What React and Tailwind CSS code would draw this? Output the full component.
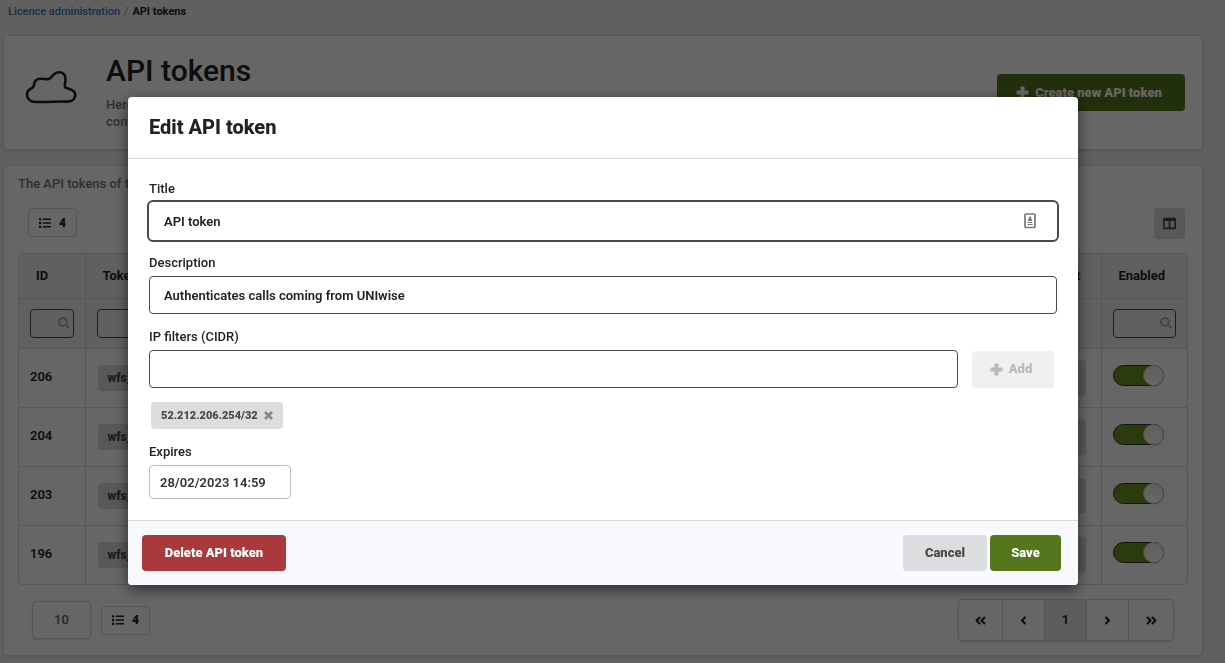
import React, { useState } from "react";
import {
  FaList,
  FaSearch,
  FaColumns,
  FaAngleDoubleLeft,
  FaAngleLeft,
  FaAngleRight,
  FaAngleDoubleRight,
} from "react-icons/fa";

const tokens = [
  { id: 206, token: "wfs_8d" },
  { id: 204, token: "wfs_c0" },
  { id: 203, token: "wfs_41" },
  { id: 196, token: "wfs_e9" },
];

const CloudIcon = () => (
  <svg
    className="h-[34px] w-[52px] shrink-0 text-[#222]"
    viewBox="0 0 52 34"
    fill="none"
    stroke="currentColor"
    strokeWidth="2.600"
    strokeLinejoin="round"
  >
    <path d="M11 32 C5.500 32 2 29 2 24.500 C2 21 4.500 18.800 7.500 17.700 C9.700 16.800 8.700 14.500 9.500 12.500 C10.500 9.800 12.500 8.700 15.500 8.700 C18.500 8.700 21.500 9.500 24 9 C26.500 8 28.500 2.600 33.500 2.300 C38.500 2.200 40.500 5 40.500 9.500 C40.500 12.500 39 16 40 17.300 C42 19 50.200 19 50.300 24.800 C50.200 29.500 46.500 31.600 42 31.600 C32 31.300 24 32.300 11 32 Z" />
  </svg>
);

const ContactIcon = () => (
  <svg className="h-4 w-3 text-[#777]" viewBox="0 0 12 16" fill="none">
    <rect x="1" y="1" width="10" height="13.500" rx="1" stroke="currentColor" strokeWidth="1.700" />
    <path d="M6 3 L7.200 5 L8.200 8 H3.800 L4.800 5 Z" fill="currentColor" />
    <path d="M3.500 9.500 H8.500 M3.500 11.500 H8.500" stroke="currentColor" />
  </svg>
);

const PlusIcon = () => (
  <svg className="size-[13px]" viewBox="0 0 13 13" fill="currentColor">
    <path d="M5.200 0.500 H7.800 Q8.500 0.500 8.500 1.200 V4.500 H11.800 Q12.500 4.500 12.500 5.200 V7.800 Q12.500 8.500 11.800 8.500 H8.500 V11.800 Q8.500 12.500 7.800 12.500 H5.200 Q4.500 12.500 4.500 11.800 V8.500 H1.200 Q0.500 8.500 0.500 7.800 V5.200 Q0.500 4.500 1.200 4.500 H4.500 V1.200 Q4.500 0.500 5.200 0.500 Z" />
  </svg>
);

const CloseIcon = () => (
  <svg className="size-[9px]" viewBox="0 0 9 9" stroke="currentColor" strokeWidth="2.800">
    <path d="M1 1 L8 8 M8 1 L1 8" />
  </svg>
);

const CountButton = ({ count }) => (
  <button
    type="button"
    className="flex h-[29px] items-center gap-2 rounded border border-[#d4d4d4] px-[10px] text-xs font-black text-[#222]"
  >
    <FaList className="size-3" />
    {count}
  </button>
);

const SearchBox = ({ label, className }) => (
  <div className={`relative ${className}`}>
    <input
      type="text"
      aria-label={label}
      className="block h-[29px] w-full rounded border border-[#4a4a4a] bg-transparent px-2 outline-none"
    />
    <FaSearch className="absolute right-1 top-2 size-3 text-[#aaa]" />
  </div>
);

const Toggle = ({ label }) => (
  <label className="relative block h-[21px] w-[51px]">
    <input
      type="checkbox"
      defaultChecked
      aria-label={label}
      className="peer block h-full w-full appearance-none rounded-full border border-[#333] bg-gray-300 checked:bg-[#6b9321]"
    />
    <span className="absolute left-0 top-0 size-[21px] rounded-full border border-[#ccc] bg-gradient-to-b from-[#eee] to-white shadow-sm peer-checked:left-[30px]" />
  </label>
);

const pages = [
  { label: "First page", icon: <FaAngleDoubleLeft /> },
  { label: "Previous page", icon: <FaAngleLeft /> },
  { label: "Page 1", icon: "1", active: true },
  { label: "Next page", icon: <FaAngleRight /> },
  { label: "Last page", icon: <FaAngleDoubleRight /> },
];

const TokenTable = () => (
  <div className="overflow-hidden rounded border border-[#d6dada]">
    <table className="w-full table-fixed border-collapse text-left">
      <thead className="bg-[#eef1f0]">
        <tr className="h-11">
          <th className="w-[66px] border-r border-[#d6dada] px-[17px] font-bold">ID</th>
          <th className="border-r border-[#d6dada] px-[17px] font-bold">Token</th>
          <th className="w-[160px] border-r border-[#d6dada] px-5 text-right font-bold">Edit</th>
          <th className="w-[86px] px-[17px] font-bold">Enabled</th>
        </tr>
        <tr className="h-[50px] border-t border-[#d6dada]">
          <td className="border-r border-[#d6dada] px-[11px]">
            <SearchBox label="Search ID" className="w-full" />
          </td>
          <td className="border-r border-[#d6dada] px-[11px]">
            <SearchBox label="Search token" className="w-1/2" />
          </td>
          <td className="border-r border-[#d6dada]" />
          <td className="px-[11px]">
            <SearchBox label="Search enabled" className="w-full" />
          </td>
        </tr>
      </thead>
      <tbody>
        {tokens.map((t) => (
          <tr key={t.id} className="h-[59px] border-t border-[#d6dada]">
            <td className="border-r border-[#d6dada] px-[11px] pb-[2px] font-semibold">{t.id}</td>
            <td className="border-r border-[#d6dada] px-3">
              <span className="inline-block h-[26px] rounded bg-[#dcddde] px-[10px] text-xs font-black leading-[26px] text-[#4a4a4a]">
                {t.token}
              </span>
            </td>
            <td className="border-r border-[#d6dada] px-[15px] text-right">
              <button type="button" className="h-9 rounded bg-[#dcddde] px-5 font-black text-[#4a4a4a]">
                Edit
              </button>
            </td>
            <td className="px-[11px] pb-[5px]">
              <Toggle label={`Enable token ${t.id}`} />
            </td>
          </tr>
        ))}
      </tbody>
    </table>
  </div>
);

const inputClass =
  "block h-[38px] w-full rounded border border-[#4a4a4a] px-[14px] font-semibold text-[#222] outline-none";
const labelClass = "mb-[3px] block pt-px font-medium leading-5";

const EditModal = () => {
  const [title, setTitle] = useState("API token");
  const [description, setDescription] = useState("Authenticates calls coming from UNIwise");
  const [filter, setFilter] = useState("");
  const [expires, setExpires] = useState("28/02/2023 14:59");

  return (
    <div
      role="dialog"
      aria-labelledby="modal-title"
      className="w-full max-w-[950px] overflow-hidden rounded bg-white shadow-[0_4px_14px_rgba(0,0,0,0.6)]"
    >
      <div className="border-b border-[#d6d8da] px-[21px] py-4">
        <h2 id="modal-title" className="text-xl font-extrabold leading-[29px]">
          Edit API token
        </h2>
      </div>

      <form className="px-[21px] pb-[21px] pt-[19px]">
        <div className="mb-3">
          <label htmlFor="title" className={labelClass}>Title</label>
          <div className="relative">
            <input
              id="title"
              type="text"
              value={title}
              onChange={(e) => setTitle(e.target.value)}
              className="block h-[38px] w-full rounded px-[15px] font-semibold text-[#222] outline-2 outline-[#4a4a4a]"
            />
            <div className="absolute right-[21px] top-[11px]">
              <ContactIcon />
            </div>
          </div>
        </div>

        <div className="mb-3">
          <label htmlFor="description" className={labelClass}>Description</label>
          <input
            id="description"
            type="text"
            value={description}
            onChange={(e) => setDescription(e.target.value)}
            className={inputClass}
          />
        </div>

        <div className="mb-3">
          <label htmlFor="ip-filter" className={labelClass}>IP filters (CIDR)</label>
          <div className="flex items-center gap-[14px] pr-[3px]">
            <input
              id="ip-filter"
              type="text"
              value={filter}
              onChange={(e) => setFilter(e.target.value)}
              className={inputClass}
            />
            <button
              type="button"
              disabled
              className="flex h-[37px] w-[82px] shrink-0 items-center justify-center gap-[6px] rounded bg-[#eef1f0] pr-1 font-black text-[#b8b9b9]"
            >
              <PlusIcon />
              Add
            </button>
          </div>
          <div className="ml-[2px] mt-[14px] inline-flex h-[27px] items-center gap-[6px] rounded bg-[#dcddde] px-[10px] align-top text-[11px] font-black text-[#4a4a4a]">
            52.212.206.254/32
            <button type="button" aria-label="Remove filter" className="text-[#888]">
              <CloseIcon />
            </button>
          </div>
        </div>

        <div>
          <label htmlFor="expires" className={labelClass}>Expires</label>
          <input
            id="expires"
            type="text"
            value={expires}
            onChange={(e) => setExpires(e.target.value)}
            className="block h-[34px] w-[142px] rounded border border-[#bbb] px-[10px] font-semibold text-[#333] outline-none"
          />
        </div>
      </form>

      <div className="flex items-center justify-between border-t border-[#d6d8da] bg-[#f8f9fc] py-[14px] pl-[14px] pr-[17px]">
        <button type="button" className="h-9 w-36 rounded bg-[#a9393d] font-black text-white">
          Delete API token
        </button>
        <div className="flex gap-[3px]">
          <button type="button" className="h-9 w-[84px] rounded bg-[#dcddde] font-black text-[#4a4a4a]">
            Cancel
          </button>
          <button type="button" className="h-9 w-[71px] rounded bg-[#56761e] font-black text-white">
            Save
          </button>
        </div>
      </div>
    </div>
  );
};

const App = () => {
  return (
    <div className="min-h-screen bg-[#f0f0f0] pb-[7px] pl-[3px] pr-[22px] font-['Roboto','Lato',sans-serif] text-[13px] leading-5 text-[#222]">
      <nav className="flex h-[35px] gap-1 px-[5px] pt-[2px] text-[11px] font-medium">
        <a href="#licence" className="text-[#3078c0]">Licence administration</a>
        <span className="text-[#999]">/</span>
        <span className="font-bold">API tokens</span>
      </nav>

      <header className="flex min-h-[115px] items-center justify-between rounded border border-[#ddd] bg-white pl-[21px] pr-[17px] shadow-sm">
        <div className="flex items-start gap-[29px]">
          <div className="pt-[19px]">
            <CloudIcon />
          </div>
          <div className="pb-[5px]">
            <h1 className="text-[30px] font-medium leading-10">API tokens</h1>
            <p className="mt-[5px] font-medium leading-[17px] text-[#777]">
              Here
              <br />
              control
            </p>
          </div>
        </div>
        <button
          type="button"
          className="flex h-[37px] w-[188px] items-center justify-center gap-[6px] rounded bg-[#56761e] pr-1 font-black text-white"
        >
          <PlusIcon />
          Create new API token
        </button>
      </header>

      <main className="mt-[15px] rounded border border-[#ddd] bg-white px-[14px] pb-[14px] pt-2 shadow-sm">
        <p className="font-medium text-[#777]">The API tokens of the</p>
        <div className="mb-[14px] mt-[14px] flex justify-between pl-[10px] pr-[3px]">
          <CountButton count={tokens.length} />
          <button
            type="button"
            aria-label="Columns"
            className="flex size-[31px] items-center justify-center rounded bg-[#dcddde] text-[#4a4a4a]"
          >
            <FaColumns className="size-[13px]" />
          </button>
        </div>

        <TokenTable />

        <div className="mt-[14px] flex items-center justify-between pl-[14px] pr-[14px]">
          <div className="flex items-center gap-[10px]">
            <button type="button" className="h-[38px] w-[59px] rounded border border-[#d4d4d4] font-medium text-[#666] shadow-sm">
              10
            </button>
            <CountButton count={tokens.length} />
          </div>
          <div className="flex h-[42px] divide-x divide-[#d8d8d8] overflow-hidden rounded border border-[#d4d4d4] shadow-sm">
            {pages.map((p) => (
              <button
                key={p.label}
                type="button"
                aria-label={p.label}
                className={`flex w-[42px] items-center justify-center font-semibold first:w-11 last:w-11 ${p.active ? "bg-[#e8e8e8]" : ""}`}
              >
                {p.icon}
              </button>
            ))}
          </div>
        </div>
      </main>

      <div className="fixed inset-0 flex items-start justify-center bg-black/60 pr-[19px] pt-[97px]">
        <EditModal />
      </div>
    </div>
  );
};

export default App;
